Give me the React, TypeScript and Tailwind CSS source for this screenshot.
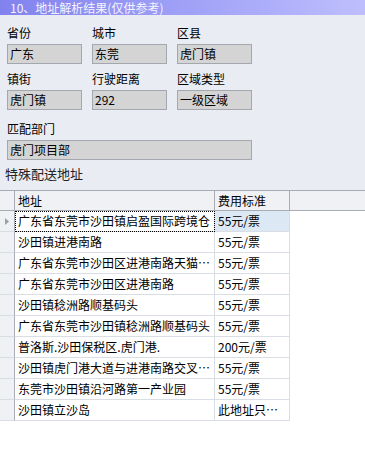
const font = { fontFamily: '"Noto Sans CJK SC", "Liberation Sans", sans-serif' };

type Field = { label: string; value: string };

const rowOne: Field[] = [
  { label: "省份", value: "广东" },
  { label: "城市", value: "东莞" },
  { label: "区县", value: "虎门镇" },
];

const rowTwo: Field[] = [
  { label: "镇街", value: "虎门镇" },
  { label: "行驶距离", value: "292" },
  { label: "区域类型", value: "一级区域" },
];

// cells already cut the way the grid shows them
const rows = [
  ["广东省东莞市沙田镇启盈国际跨境仓", "55元/票"],
  ["沙田镇进港南路", "55元/票"],
  ["广东省东莞市沙田区进港南路天猫…", "55元/票"],
  ["广东省东莞市沙田区进港南路", "55元/票"],
  ["沙田镇稔洲路顺基码头", "55元/票"],
  ["广东省东莞市沙田镇稔洲路顺基码头", "55元/票"],
  ["普洛斯.沙田保税区.虎门港.", "200元/票"],
  ["沙田镇虎门港大道与进港南路交叉…", "55元/票"],
  ["东莞市沙田镇沿河路第一产业园", "55元/票"],
  ["沙田镇立沙岛", "此地址只…"],
];

const FieldBox = ({ label, value, wide }: Field & { wide?: boolean }) => (
  <div className="flex flex-col">
    <div className="h-4 leading-4 text-[12px] text-black">{label}</div>
    <div
      className={`mt-[3px] h-5 border border-[#a3a7ae] bg-[#d4d4d4] pl-[2px] text-[12px] leading-[18px] text-black ${
        wide ? "w-[245px]" : "w-[75px]"
      }`}
    >
      {value}
    </div>
  </div>
);

export default function App() {
  return (
    <div className="w-[365px] h-[471px] bg-white flex flex-col overflow-hidden" style={font}>
      <div className="h-[15px] bg-gradient-to-r from-[#8282ee] to-[#bebefd] pl-[10px] text-[12px] leading-[15px] text-[#f4f4ff]">
        10、地址解析结果(仅供参考)
      </div>

      <div className="bg-[#e9ecf2] pl-[7px] pt-[10px] h-[175px] flex flex-col">
        <div className="flex gap-[10px]">
          {rowOne.map((f) => (
            <FieldBox key={f.label} {...f} />
          ))}
        </div>
        <div className="flex gap-[10px] mt-[7px]">
          {rowTwo.map((f) => (
            <FieldBox key={f.label} {...f} />
          ))}
        </div>
        <div className="mt-[11px]">
          <FieldBox label="匹配部门" value="虎门项目部" wide />
        </div>
        <div className="-ml-[2px] mt-[6px] text-[13px] leading-4 text-[#222]">特殊配送地址</div>
      </div>

      <div className="flex-1 bg-white border-t border-[#a7acb5] text-[12px] text-black">
        <div className="flex h-5 bg-[#eff1f5] border-b border-[#a7acb5]">
          <div className="w-[15px] border-r border-[#a7acb5]" />
          <div className="w-[200px] border-r border-[#a7acb5] pl-[3px] leading-[19px]">地址</div>
          <div className="w-[75px] border-r border-[#a7acb5] pl-[3px] leading-[19px]">费用标准</div>
        </div>
        {rows.map(([addr, fee], i) => (
          <div key={i} className="flex h-[21px]">
            <div className="w-[15px] bg-[#eff1f5] border-r border-[#a7acb5] border-b border-b-[#d9dde4] flex items-center justify-center">
              {i === 0 && (
                <svg width="5" height="7" viewBox="0 0 5 7">
                  <path d="M0 0 L4 3.5 L0 7 Z" fill="#9aa0a8" />
                </svg>
              )}
            </div>
            <div
              className={`w-[200px] border-r border-b border-[#d9dde4] pl-[3px] leading-[20px] whitespace-nowrap ${
                i === 0 ? "outline outline-1 outline-dotted outline-black -outline-offset-1" : ""
              }`}
            >
              {addr}
            </div>
            <div
              className={`w-[75px] border-r border-b border-[#d9dde4] pl-[3px] leading-[20px] whitespace-nowrap ${
                i === 0 ? "bg-[#dde8f5]" : ""
              }`}
            >
              {fee}
            </div>
          </div>
        ))}
      </div>
    </div>
  );
}
